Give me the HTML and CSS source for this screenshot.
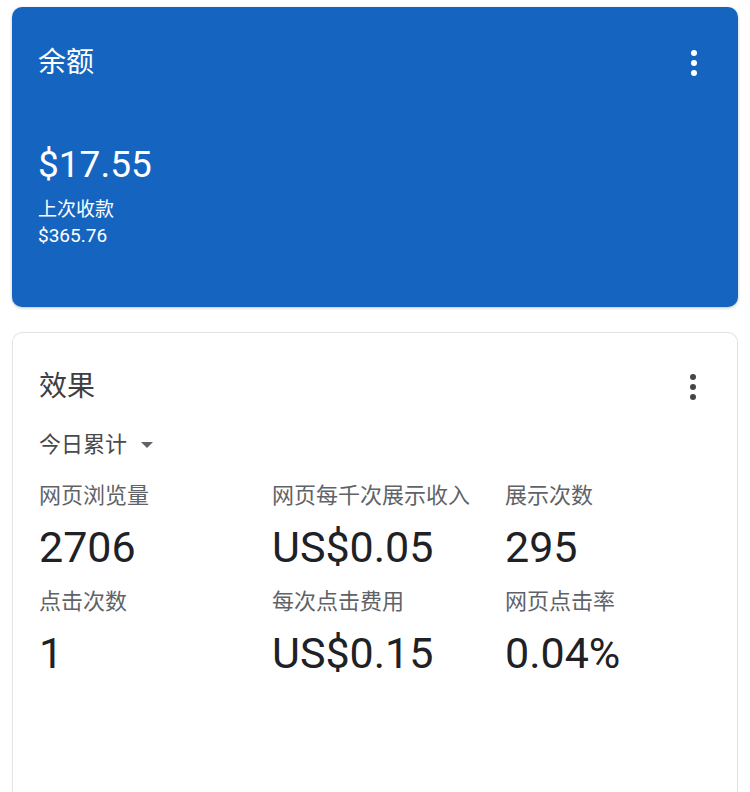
FILE: index.html
```html
<!DOCTYPE html>
<html lang="zh-CN">
<head>
    <meta charset="UTF-8">
    <meta name="viewport" content="width=device-width, initial-scale=1.0">
    <title>余额与效果</title>
    <link rel="stylesheet" href="styles.css">
</head>
<body>
    <div class="card balance-card">
        <div class="card-head">
            <h2 class="card-title">余额</h2>
            <span class="kebab"><i></i><i></i><i></i></span>
        </div>
        <p class="balance">$17.55</p>
        <p class="last-label">上次收款</p>
        <p class="last-value">$365.76</p>
    </div>

    <div class="card perf-card">
        <div class="card-head">
            <h2 class="card-title">效果</h2>
            <span class="kebab"><i></i><i></i><i></i></span>
        </div>
        <div class="range">今日累计 <span class="caret"></span></div>
        <div class="stats">
            <div class="stat">
                <p class="stat-label">网页浏览量</p>
                <p class="stat-value">2706</p>
            </div>
            <div class="stat">
                <p class="stat-label">网页每千次展示收入</p>
                <p class="stat-value">US$0.05</p>
            </div>
            <div class="stat">
                <p class="stat-label">展示次数</p>
                <p class="stat-value">295</p>
            </div>
            <div class="stat">
                <p class="stat-label">点击次数</p>
                <p class="stat-value">1</p>
            </div>
            <div class="stat">
                <p class="stat-label">每次点击费用</p>
                <p class="stat-value">US$0.15</p>
            </div>
            <div class="stat">
                <p class="stat-label">网页点击率</p>
                <p class="stat-value">0.04%</p>
            </div>
        </div>
    </div>
</body>
</html>
```

FILE: styles.css
```css
body {
    margin: 0;
    padding: 7px 12px 0;
    background-color: #ffffff;
    font-family: Roboto, "Noto Sans CJK SC", sans-serif;
    overflow: hidden;
}
p, h2 {
    margin: 0;
}
.card {
    border-radius: 10px;
    padding: 40px 26px 0;
    box-sizing: border-box;
}
.balance-card {
    height: 300px;
    background-color: #1565c0;
    color: #ffffff;
    box-shadow: 0 1px 3px rgba(0, 0, 0, 0.25);
}
/* card keeps going below the fold */
.perf-card {
    margin-top: 25px;
    padding-top: 38px;
    height: 460px;
    border: 1px solid #e3e3e3;
    border-bottom: none;
    border-radius: 10px 10px 0 0;
    color: #202124;
}
.card-head {
    display: flex;
    justify-content: space-between;
    align-items: center;
}
.card-title {
    font-size: 28px;
    line-height: 32px;
    font-weight: 400;
}
.perf-card .card-title {
    color: #3c4043;
}
.kebab {
    display: flex;
    flex-direction: column;
    gap: 4px;
    margin-right: 15px;
}
.kebab i {
    width: 6px;
    height: 6px;
    border-radius: 50%;
    background-color: #ffffff;
}
.perf-card .kebab i {
    background-color: #444746;
}
.balance {
    margin-top: 62px;
    font-size: 37px;
    line-height: 48px;
}
.last-label {
    margin-top: 9px;
    font-size: 19px;
    line-height: 24px;
}
.last-value {
    margin-top: 3px;
    font-size: 19px;
    line-height: 22px;
}
.range {
    margin-top: 29px;
    font-size: 22px;
    line-height: 26px;
    color: #4a4a4a;
    display: flex;
    align-items: center;
    gap: 14px;
}
.caret {
    width: 0;
    height: 0;
    border-left: 6px solid transparent;
    border-right: 6px solid transparent;
    border-top: 6px solid #5f6368;
}
.stats {
    margin-top: 25px;
    display: grid;
    grid-template-columns: 233px 233px 1fr;
    row-gap: 17px;
}
.stat-label {
    font-size: 22px;
    line-height: 26px;
    color: #5f6368;
}
.stat-value {
    margin-top: 13px;
    font-size: 43px;
    line-height: 50px;
    color: #202124;
}
```
